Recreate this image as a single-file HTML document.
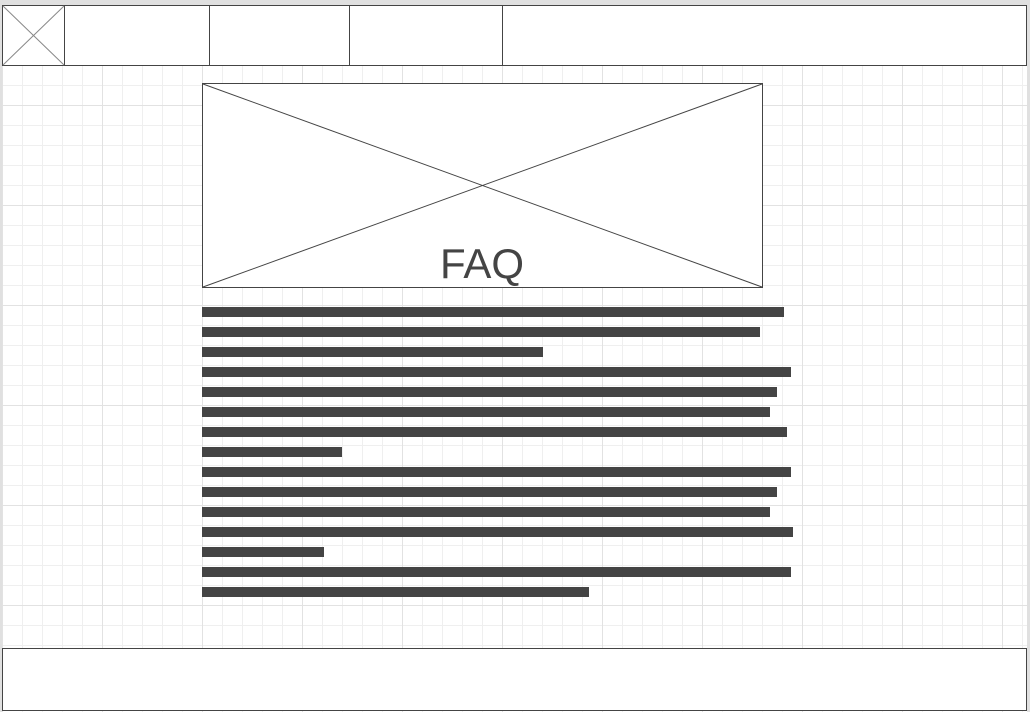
<!DOCTYPE html>
<html><head><style>
html,body{margin:0;padding:0;}
body{width:1030px;height:712px;background:#e0e0e0;position:relative;overflow:hidden;font-family:"Liberation Sans",sans-serif;}
.canvas{position:absolute;left:2px;top:5px;width:1025px;height:707px;background-color:#fff;
background-image:linear-gradient(#e2e2e2 1px,transparent 1px),linear-gradient(90deg,#e2e2e2 1px,transparent 1px),linear-gradient(#efefef 1px,transparent 1px),linear-gradient(90deg,#efefef 1px,transparent 1px);
background-size:100px 100px,100px 100px,20px 20px,20px 20px;
background-position:0 0,0 0,0 0,0 0;}
.box{position:absolute;border:1px solid #444;background:#fff;box-sizing:border-box;}
.bar{position:absolute;left:202px;height:10px;background:#444;}
</style></head><body>
<div class="canvas"></div>
<div class="box" style="left:2px;top:5px;width:1025px;height:61px;"></div>
<div style="position:absolute;left:64px;top:5px;width:1px;height:61px;background:#444"></div>
<div style="position:absolute;left:209px;top:5px;width:1px;height:61px;background:#444"></div>
<div style="position:absolute;left:349px;top:5px;width:1px;height:61px;background:#444"></div>
<div style="position:absolute;left:502px;top:5px;width:1px;height:61px;background:#444"></div>
<svg style="position:absolute;left:2px;top:5px" width="63" height="61"><line x1="1" y1="1" x2="62" y2="60" stroke="#888" stroke-width="1"/><line x1="62" y1="1" x2="1" y2="60" stroke="#888" stroke-width="1"/></svg>
<div class="box" style="left:202px;top:83px;width:561px;height:205px;"></div>
<svg style="position:absolute;left:202px;top:83px" width="561" height="205"><line x1="1" y1="1" x2="560" y2="204" stroke="#444"/><line x1="560" y1="1" x2="1" y2="204" stroke="#444"/></svg>
<div style="position:absolute;left:402px;width:160px;top:240px;text-align:center;font-size:42px;color:#444;line-height:48px;">FAQ</div>
<div class="bar" style="top:307px;width:582px"></div>
<div class="bar" style="top:327px;width:558px"></div>
<div class="bar" style="top:347px;width:341px"></div>
<div class="bar" style="top:367px;width:589px"></div>
<div class="bar" style="top:387px;width:575px"></div>
<div class="bar" style="top:407px;width:568px"></div>
<div class="bar" style="top:427px;width:585px"></div>
<div class="bar" style="top:447px;width:140px"></div>
<div class="bar" style="top:467px;width:589px"></div>
<div class="bar" style="top:487px;width:575px"></div>
<div class="bar" style="top:507px;width:568px"></div>
<div class="bar" style="top:527px;width:591px"></div>
<div class="bar" style="top:547px;width:122px"></div>
<div class="bar" style="top:567px;width:589px"></div>
<div class="bar" style="top:587px;width:387px"></div>
<div class="box" style="left:2px;top:648px;width:1025px;height:63px;"></div>
</body></html>
